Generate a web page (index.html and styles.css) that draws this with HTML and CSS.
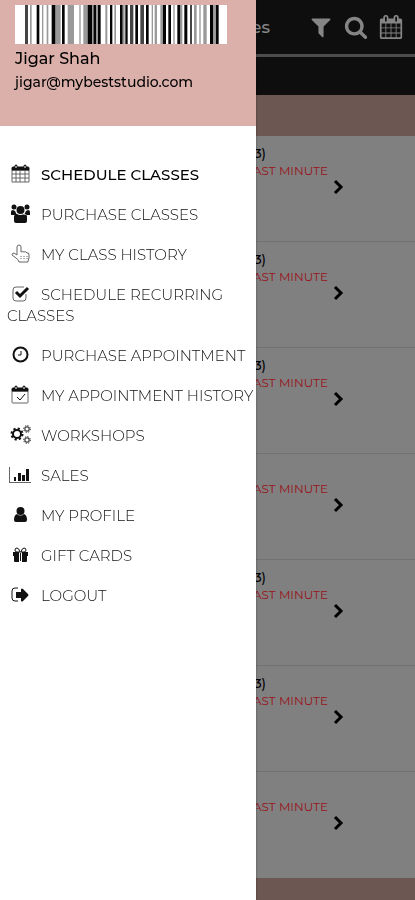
FILE: index.html
```
<!DOCTYPE html>
<html lang="en">
<head>
    <meta charset="UTF-8">
    <meta name="viewport" content="width=device-width, initial-scale=1">
    <title>Classes</title>
    <link rel="stylesheet" href="styles.css">
</head>
<body>
    <!-- shared icons -->
    <svg class="sprite" aria-hidden="true">
        <symbol id="icon-chevron" viewBox="0 0 12 16">
            <path d="M2 2l6 6-6 6" fill="none" stroke="currentColor" stroke-width="3"/>
        </symbol>
    </svg>

    <div class="page">
        <header class="topbar">
            <h1>Classes</h1>
            <button class="icon-button" aria-label="Filter">
                <svg viewBox="0 0 1792 1792"><path d="M1595 295q17 41-14 70l-493 493v742q0 42-39 59-13 5-25 5-27 0-45-19l-256-256q-19-19-19-45v-486l-493-493q-31-29-14-70 17-39 59-39h1280q42 0 59 39z"/></svg>
            </button>
            <button class="icon-button" aria-label="Search">
                <svg viewBox="0 0 1792 1792"><path d="M1216 832q0-185-131.500-316.500t-316.500-131.500-316.500 131.500-131.500 316.500 131.500 316.500 316.500 131.500 316.500-131.500 131.500-316.500zm512 832q0 52-38 90t-90 38q-54 0-90-38l-343-342q-179 124-399 124-143 0-273.500-55.500t-225-150-150-225-55.500-273.500 55.500-273.500 150-225 225-150 273.500-55.500 273.500 55.500 225 150 150 225 55.500 273.500q0 220-124 399l343 343q37 37 37 90z"/></svg>
            </button>
            <button class="icon-button" aria-label="Calendar">
                <svg viewBox="0 0 1792 1792"><path d="M192 1664h288v-288h-288v288zm352 0h320v-288h-320v288zm-352-352h288v-320h-288v320zm352 0h320v-320h-320v320zm-352-384h288v-288h-288v288zm736 736h320v-288h-320v288zm-384-736h320v-288h-320v288zm768 736h288v-288h-288v288zm-384-352h320v-320h-320v320zm-352-864v-288q0-13-9.500-22.500t-22.500-9.500h-64q-13 0-22.500 9.500t-9.500 22.500v288q0 13 9.500 22.500t22.500 9.500h64q13 0 22.500-9.500t9.500-22.500zm736 864h288v-320h-288v320zm-384-384h320v-288h-320v288zm384 0h288v-288h-288v288zm32-480v-288q0-13-9.500-22.500t-22.500-9.500h-64q-13 0-22.500 9.500t-9.500 22.500v288q0 13 9.500 22.500t22.500 9.500h64q13 0 22.500-9.500t9.500-22.500zm384-64v1280q0 52-38 90t-90 38h-1408q-52 0-90-38t-38-90v-1280q0-52 38-90t90-38h128v-96q0-66 47-113t113-47h64q66 0 113 47t47 113v96h384v-96q0-66 47-113t113-47h64q66 0 113 47t47 113v96h128q52 0 90 38t38 90z"/></svg>
            </button>
        </header>
        <div class="tabs"></div>
        <div class="band"></div>
        <ul class="class-list">
            <li><div class="info"><p class="name">(3)</p><p class="status">LAST MINUTE</p></div><svg class="chevron"><use href="#icon-chevron"/></svg></li>
            <li><div class="info"><p class="name">(3)</p><p class="status">LAST MINUTE</p></div><svg class="chevron"><use href="#icon-chevron"/></svg></li>
            <li><div class="info"><p class="name">(3)</p><p class="status">LAST MINUTE</p></div><svg class="chevron"><use href="#icon-chevron"/></svg></li>
            <li><div class="info"><p class="name"></p><p class="status">LAST MINUTE</p></div><svg class="chevron"><use href="#icon-chevron"/></svg></li>
            <li><div class="info"><p class="name">(3)</p><p class="status">LAST MINUTE</p></div><svg class="chevron"><use href="#icon-chevron"/></svg></li>
            <li><div class="info"><p class="name">(3)</p><p class="status">LAST MINUTE</p></div><svg class="chevron"><use href="#icon-chevron"/></svg></li>
            <li><div class="info"><p class="name"></p><p class="status">LAST MINUTE</p></div><svg class="chevron"><use href="#icon-chevron"/></svg></li>
        </ul>
        <div class="band band-bottom"></div>
    </div>

    <aside class="drawer">
        <div class="profile">
            <svg class="barcode" viewBox="0 0 636 117" preserveAspectRatio="none" role="img" aria-label="Member barcode">
                <path fill="#fff" d="M0 0h636v117H0z"/>
                <path fill="#999" d="M45 0h5v117h-5zM81 0h4v117h-4zM95 0h5v117h-5zM121 0h16v117h-16zM158 0h19v117h-19zM193 0h4v117h-4zM205 0h13v117h-13zM231 0h24v117h-24zM271 0h6v117h-6zM298 0h5v117h-5zM324 0h5v117h-5zM410 0h4v117h-4zM419 0h7v117h-7zM436 0h6v117h-6zM475 0h4v117h-4zM497 0h5v117h-5zM537 0h8v117h-8zM553 0h4v117h-4zM565 0h10v117h-10zM594 0h10v117h-10z"/>
                <path fill="#444" d="M30 0h9v117h-9zM345 0h10v117h-10zM376 0h11v117h-11zM525 0h6v117h-6z"/>
                <path fill="#050505" d="M65 0h8v117h-8zM110 0h11v117h-11zM141 0h8v117h-8zM218 0h13v117h-13zM236 0h7v117h-7zM249 0h8v117h-8zM285 0h7v117h-7zM315 0h8v117h-8zM331 0h7v117h-7zM361 0h8v117h-8zM393 0h8v117h-8zM443 0h10v117h-10zM460 0h8v117h-8zM487 0h9v117h-9zM508 0h9v117h-9zM585 0h9v117h-9zM603 0h8v117h-8z"/>
            </svg>
            <p class="user-name">Jigar Shah</p>
            <p class="user-email">jigar@mybeststudio.com</p>
        </div>
        <nav class="menu">
            <a href="#" class="active"><svg viewBox="0 0 26 20" class="line">
                <path class="soft" d="M5 6h17v12H5zM9 7v11M13 7v11M18 7v11M5 10h17M5 14h17"/>
                <path class="solid" d="M5 6V4q0-1 1-1h2V2q0-1 1-1t1 1v1h7V2q0-1 1-1t1 1v1h2q1 0 1 1v2z"/>
                <path d="M9 2v2M18 2v2" stroke="#fff"/>
            </svg>SCHEDULE CLASSES</a>
            <a href="#"><svg viewBox="0 0 26 20">
                <circle cx="7" cy="3" r="2.500"/><circle cx="20" cy="3" r="2.500"/><circle cx="13.500" cy="6" r="4"/>
                <path d="M4 11V8q0-2 2-2l2 1q1 3 3 4zM23 11V8q0-2-2-2l-2 1q-1 3-3 4zM7 17v-4q0-3 3-3 3 2 7 0 3 0 3 3v4q0 2-2 2H9q-2 0-2-2z"/>
            </svg>PURCHASE CLASSES</a>
            <a href="#"><svg viewBox="0 0 26 20" class="line soft">
                <path d="M10 11V3q0-2 2-2t2 2v5q1-1 3 0 2-1 3 1 2-1 2 2v3l-1 3v1h-9q-1-3-3-4l-4-3q0-2 2-2z"/>
                <path d="M14 12v3M17 12v3M20 12v3" stroke-dasharray="1 1"/>
            </svg>MY CLASS HISTORY</a>
            <a href="#"><svg viewBox="0 0 26 20" class="line">
                <path class="soft" d="M19 10v4q0 3-3 3H9q-3 0-3-3V6q0-3 3-3h8"/>
                <path d="M9 8l4 4 8-8" stroke-width="3"/>
            </svg>SCHEDULE RECURRING CLASSES</a>
            <a href="#"><svg viewBox="0 0 26 20" class="line">
                <circle class="thick" cx="13.500" cy="9.500" r="7"/><path d="M14 6v4h-3"/>
            </svg>PURCHASE APPOINTMENT</a>
            <a href="#"><svg viewBox="0 0 26 20" class="line">
                <path class="soft" d="M5 6h16v11q0 1-1 1H6q-1 0-1-1z"/>
                <path d="M10 12l3 3 5-6"/>
                <path class="solid" d="M5 6V4q0-1 1-1h2V2q0-1 1-1t1 1v1h6V2q0-1 1-1t1 1v1h2q1 0 1 1v2z"/>
                <path d="M9 2v2M17 2v2" stroke="#fff"/>
            </svg>MY APPOINTMENT HISTORY</a>
            <a href="#"><svg viewBox="0 0 26 20" class="line">
                <circle class="thick" cx="10" cy="9" r="4"/>
                <circle cx="10" cy="9" r="5.500" stroke-width="2" stroke-dasharray="2.200 2.120"/>
                <circle cx="20" cy="4" r="2.200"/><circle cx="20" cy="4" r="3.300" stroke-dasharray="1.300 1.290"/>
                <circle cx="20" cy="15" r="2.200"/><circle cx="20" cy="15" r="3.300" stroke-dasharray="1.300 1.290"/>
            </svg>WORKSHOPS</a>
            <a href="#"><svg viewBox="0 0 26 20">
                <path d="M2 2h1v15h21v1H2z" fill="#666"/>
                <path d="M7 12h2v4H7zM11 8h3v8h-3zM15 10h3v6h-3zM19 4h3v12h-3z"/>
            </svg>SALES</a>
            <a href="#"><svg viewBox="0 0 26 20">
                <circle cx="13.500" cy="6" r="4"/><path d="M7 15q0-5 3-6 3.500 3 7 0 3 1 3 6 0 2-2 2H9q-2 0-2-2z"/>
            </svg>MY PROFILE</a>
            <a href="#"><svg viewBox="0 0 26 20">
                <path d="M6 7h6v10H8q-1 0-1-1v-5H6zM15 7h6v4h-1v5q0 1-1 1h-4zM13 8h1v8h-1z"/>
                <path d="M13 7h-3q-2 0-2-2t2-2q2 0 3 4h1q1-4 3-4 2 0 2 2t-2 2h-3" fill="none" stroke="currentColor"/>
            </svg>GIFT CARDS</a>
            <a href="#"><svg viewBox="0 0 26 20">
                <path d="M11 16H8q-3 0-3-3V6q0-3 3-3h3" fill="none" stroke="currentColor"/>
                <path d="M9 7h5V4q1-1 2 0l5 5q1 1 0 2l-5 5q-1 1-2 0v-3H9z"/>
            </svg>LOGOUT</a>
        </nav>
    </aside>
</body>
</html>
```

FILE: styles.css
```
* {
    box-sizing: border-box;
}
body {
    margin: 0;
    font-family: Montserrat, Inter, sans-serif;
    background-color: #808080;
    color: #000;
}
p, h1, ul {
    margin: 0;
    padding: 0;
}
.sprite {
    display: none;
}

/* dimmed page behind the drawer */
.page {
    display: flex;
    flex-direction: column;
    min-height: 100vh;
}
.topbar {
    display: flex;
    align-items: center;
    gap: 11px;
    height: 57px;
    padding-right: 12px;
    background-color: #0e0e0f;
    border-bottom: 3px solid #4c4c4c;
    color: #858585;
}
.topbar h1 {
    width: 67%;
    margin-right: auto;
    font-size: 17px;
    font-weight: 500;
    text-align: right;
}
.icon-button {
    width: 24px;
    height: 24px;
    padding: 0;
    border: none;
    background: none;
    color: #858585;
    cursor: pointer;
}
.icon-button svg {
    display: block;
    width: 24px;
    height: 24px;
    fill: currentColor;
}
.tabs {
    height: 38px;
    background-color: #0e0e0f;
}
.band {
    height: 41px;
    background-color: #6d5753;
}
.band-bottom {
    flex: 1;
    height: auto;
}
.class-list {
    list-style: none;
}
.class-list li {
    display: flex;
    height: 106px;
    padding: 8px 70px 0 0;
    border-bottom: 1px solid #717171;
}
.class-list li:last-child {
    border-bottom: none;
}
.info {
    flex: 1;
    text-align: right;
}
.name {
    height: 19px;
    padding-right: 62px;
    font-size: 13px;
    font-weight: 500;
    line-height: 19px;
}
.status {
    color: #98141c;
    font-size: 12px;
    line-height: 16px;
}
.chevron {
    width: 12px;
    height: 16px;
    margin: 35px 0 0 5px;
}

/* side menu */
.drawer {
    position: fixed;
    top: 0;
    left: 0;
    bottom: 0;
    width: 256px;
    background-color: #fff;
    box-shadow: 0 0 2px rgba(0, 0, 0, 0.4);
    overflow-y: auto;
}
.profile {
    height: 126px;
    padding: 5px 15px;
    background-color: #dbb0aa;
}
.barcode {
    display: block;
    width: 212px;
    height: 39px;
    margin-bottom: 3px;
}
.user-name {
    font-size: 16px;
    font-weight: 500;
    line-height: 24px;
}
.user-email {
    font-size: 14px;
    font-weight: 500;
    line-height: 22px;
}
.menu {
    display: flex;
    flex-direction: column;
    gap: 19px;
    padding: 38px 0 20px 7px;
}
.menu a {
    color: #111;
    font-size: 15px;
    font-weight: 300;
    line-height: 21px;
    text-decoration: none;
}
.menu a.active {
    color: #000;
    font-weight: 500;
}
.menu svg {
    width: 26px;
    height: 20px;
    margin-right: 8px;
    vertical-align: -4px;
    color: #111;
    fill: currentColor;
}
.menu .line {
    fill: none;
    stroke: currentColor;
}
.menu .soft {
    stroke: #666;
}
.menu .thick {
    stroke-width: 2;
}
.menu .solid {
    fill: currentColor;
}
```
